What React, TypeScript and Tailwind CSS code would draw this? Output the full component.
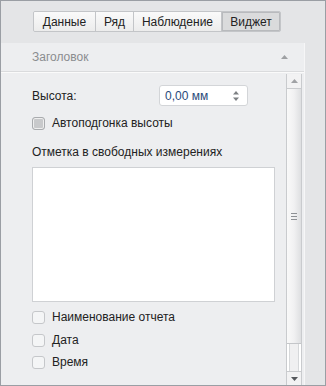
import React from "react";

const tabs = [
  { t: "Данные", w: "w-[61px]" },
  { t: "Ряд", w: "w-[38px]" },
  { t: "Наблюдение", w: "w-[88px]" },
  { t: "Виджет", w: "w-[59px]" },
];

function Check({ label, filled }: { label: string; filled?: boolean }) {
  return (
    <div className="flex h-[13px] items-center gap-[7px]">
      <span
        className={
          "h-[13px] w-[13px] shrink-0 rounded-[3px] border " +
          (filled ? "border-[#a9abae] bg-[#c8c9cb] shadow-[inset_0_0_0_1px_#eeeeee]" : "border-[#c5c7ca] bg-[#f4f5f6]")
        }
      />
      <span className="text-[12px] leading-[13px] text-[#222]">{label}</span>
    </div>
  );
}

export default function App() {
  return (
    <div
      className="h-[386px] w-[326px] overflow-hidden border border-[#9a9ea4] bg-[#e4e5e7]"
      style={{ fontFamily: '"Liberation Sans", Arial, sans-serif' }}
    >
      <div className="flex h-[42px] items-start pl-[32px] pt-[10px]">
        <div className="flex h-[21px] overflow-hidden rounded-[2px] border border-[#c3c5c8] text-[12px] text-[#222]">
          {tabs.map(({ t, w }, i) => (
            <div
              key={t}
              className={
                "flex items-center justify-center " +
                w +
                " " +
                (i > 0 ? "border-l border-[#c3c5c8] " : "") +
                (i === 3
                  ? "bg-[#dadbdc] border-[#8f9296] shadow-[inset_0_0_0_1px_#b8babd]"
                  : "bg-gradient-to-b from-[#fafafa] to-[#ececec]")
              }
            >
              {t}
            </div>
          ))}
        </div>
      </div>
      <div className="flex h-[343px]">
        <div className="flex w-[304px] flex-col border-r border-[#f6f6f7] bg-[#edeef0]">
          <div className="flex h-[29px] shrink-0 items-center justify-between border-b border-[#dadbdd] pl-[31px] pr-[16px] shadow-[0_1px_0_#fafafa]">
            <span className="text-[12px] text-[#8a8c8f]">Заголовок</span>
            <svg width="7" height="4" viewBox="0 0 7 4">
              <path d="M0 4 3.5 0 7 4z" fill="#9ea0a3" />
            </svg>
          </div>
          <div className="flex min-h-0 flex-1 pt-[2px]">
            <div className="flex flex-1 flex-col pl-[31px] pr-[11px]">
              <div className="mt-[11px] flex items-center justify-between">
                <span className="text-[12px] text-[#222]">Высота:</span>
                <div className="mr-[27px] flex h-[21px] w-[89px] items-center justify-between rounded-[3px] border border-[#d3d5d8] bg-white pl-[5px] pr-[8px]">
                  <span className="text-[12px] text-[#2a4a7a]">0,00 мм</span>
                  <svg width="6" height="10" viewBox="0 0 6 10">
                    <path d="M0 3.5 3 0 6 3.5z" fill="#7d8084" />
                    <path d="M0 6.5 3 10 6 6.5z" fill="#7d8084" />
                  </svg>
                </div>
              </div>
              <div className="mt-[11px]">
                <Check label="Автоподгонка высоты" filled />
              </div>
              <div className="mt-[14px] text-[12px] leading-[16px] text-[#222]">Отметка в свободных измерениях</div>
              <div className="mt-[7px] h-[135px] border border-[#cfd1d4] bg-white" />
              <div className="mt-[9px] flex flex-col gap-[9.5px]">
                <Check label="Наименование отчета" />
                <Check label="Дата" />
                <Check label="Время" />
              </div>
            </div>
            <div className="mr-[2px] flex w-[16px] flex-col border-x border-[#c9cbce] bg-[#f7f7f8]">
              <div className="flex h-[15px] items-center justify-center border-b border-[#c9cbce] bg-[#f2f2f3]">
                <svg width="7" height="4" viewBox="0 0 7 4">
                  <path d="M0 4 3.5 0 7 4z" fill="#a0a2a5" />
                </svg>
              </div>
              <div className="flex h-[255px] items-center justify-center border-b border-[#c4c6c9] bg-gradient-to-r from-[#f9f9f9] via-[#f1f1f2] to-[#dedfe1]">
                <div className="flex flex-col gap-[2px]">
                  <span className="h-[1px] w-[6px] bg-[#8d9094]" />
                  <span className="h-[1px] w-[6px] bg-[#8d9094]" />
                  <span className="h-[1px] w-[6px] bg-[#8d9094]" />
                </div>
              </div>
              <div className="flex-1 bg-white px-[2px]">
                <div className="h-full border-x border-[#d6d8da] bg-[#f0f0f1]" />
              </div>
              <div className="flex h-[15px] items-center justify-center border-t border-[#c9cbce] bg-[#f2f2f3]">
                <svg width="7" height="4" viewBox="0 0 7 4">
                  <path d="M0 0 3.5 4 7 0z" fill="#55585c" />
                </svg>
              </div>
            </div>
          </div>
        </div>
        <div className="flex-1" />
      </div>
    </div>
  );
}
